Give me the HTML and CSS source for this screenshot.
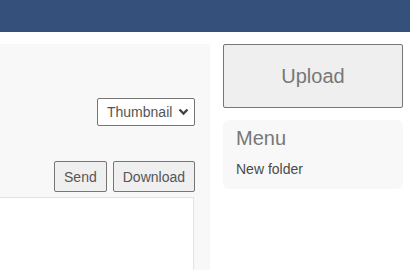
FILE: index.html
```html
<!DOCTYPE html>
<html lang="en">
<head>
  <meta charset="UTF-8" />
  <meta name="viewport" content="width=device-width, initial-scale=1" />
  <title>Files</title>
  <link rel="stylesheet" href="styles.css">
</head>
<body>

  <header class="topbar"></header>

  <div class="layout">
    <section class="files">
      <div class="view-row">
        <div class="select-wrap">
          <select class="view-select">
            <option>Thumbnail</option>
            <option>List</option>
          </select>
          <svg class="chevron" width="11" height="8" viewBox="0 0 11 8">
            <path d="M1.5 1.5 L5.5 5.5 L9.5 1.5" fill="none" stroke="#444" stroke-width="2.4" />
          </svg>
        </div>
      </div>
      <div class="actions">
        <button class="btn">Send</button>
        <button class="btn">Download</button>
      </div>
      <div class="file-area"></div>
    </section>

    <aside class="sidebar">
      <button class="upload">Upload</button>
      <div class="menu-card">
        <h3>Menu</h3>
        <a class="menu-link">New folder</a>
      </div>
    </aside>
  </div>

</body>
</html>
```

FILE: styles.css
```css
body {
  margin: 0;
  font-family: "Liberation Sans", Arial, sans-serif;
  background: #fff;
  height: 100vh;
  overflow: hidden;
}
.topbar {
  height: 32px;
  background: #35507a;
}
.layout {
  display: flex;
  gap: 13px;
  margin-top: 12px;
  height: calc(100vh - 44px);
}
/* zona dos arquivos */
.files {
  width: 210px;
  background: #f8f8f8;
  padding: 54px 15px 0 0;
  box-sizing: border-box;
  display: flex;
  flex-direction: column;
}
.view-row {
  display: flex;
  justify-content: flex-end;
}
.select-wrap {
  position: relative;
}
.view-select {
  appearance: none;
  -webkit-appearance: none;
  width: 98px;
  height: 28px;
  padding: 0 0 0 9px;
  border: 1px solid #767676;
  border-radius: 2px;
  background: #fff;
  color: #555;
  font-family: inherit;
  font-size: 14px;
}
.chevron {
  position: absolute;
  right: 6px;
  top: 10px;
  pointer-events: none;
}
.actions {
  display: flex;
  justify-content: flex-end;
  gap: 6px;
  margin-top: 35px;
}
.btn {
  height: 31px;
  padding: 0 9px;
  background: #efefef;
  border: 1px solid #767676;
  border-radius: 2px;
  color: #555;
  font-family: inherit;
  font-size: 14px;
}
.file-area {
  flex: 1;
  margin-top: 5px;
  margin-right: 1px;
  background: #fff;
  border: 1px solid #e3e3e3;
  border-left: none;
  border-bottom: none;
}
/* barra lateral */
.sidebar {
  width: 180px;
  display: flex;
  flex-direction: column;
  gap: 12px;
}
.upload {
  height: 64px;
  background: #efefef;
  border: 1px solid #767676;
  border-radius: 2px;
  color: #777;
  font-family: inherit;
  font-size: 20px;
}
.menu-card {
  background: #f8f8f8;
  border-radius: 6px;
  padding: 7px 13px 12px;
}
.menu-card h3 {
  margin: 0 0 11px;
  font-size: 20px;
  line-height: 23px;
  font-weight: normal;
  color: #777;
}
.menu-link {
  display: block;
  font-size: 14px;
  line-height: 16px;
  color: #4a4a4a;
}
```
